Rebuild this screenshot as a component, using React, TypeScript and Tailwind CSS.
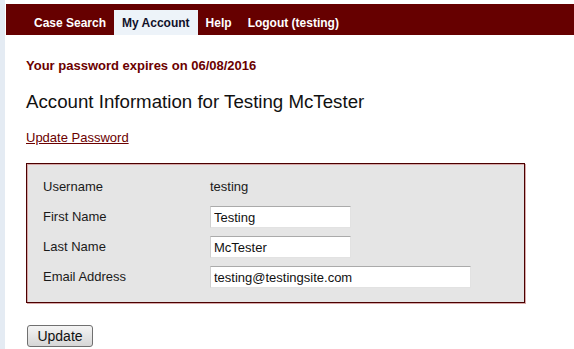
import React from 'react';

const navItems = ['Case Search', 'My Account', 'Help', 'Logout (testing)'];

const Field: React.FC<{ label: string; children: React.ReactNode }> = ({ label, children }) => (
  <div className="flex items-center h-[22px]">
    <div className="w-[167px]">{label}</div>
    {children}
  </div>
);

const TextInput: React.FC<{ value: string; width: string }> = ({ value, width }) => (
  <input
    defaultValue={value}
    className={`${width} h-[22px] bg-white border border-[#e2e2e2] border-t-[#aaaaaa] border-l-[#d0d0d0] pl-[3px] text-[13px] text-[#111] outline-none`}
  />
);

export default function App() {
  return (
    <div className="flex min-h-[349px] bg-white font-['Liberation_Sans',Arial,sans-serif]">
      <div className="w-[5px] shrink-0 bg-[#e4ebf3]" />
      <div className="flex-1 ml-px pt-[4px]">
        <nav className="h-[31px] bg-[#660000] flex items-end pl-[20px]">
          {navItems.map((item) => (
            <div
              key={item}
              className={
                item === 'My Account'
                  ? 'h-[25px] px-[8px] flex items-center text-[12px] font-bold text-[#11112a] bg-[#edf3f9]'
                  : 'h-[25px] px-[8px] flex items-center text-[12px] font-bold text-white'
              }
            >
              {item}
            </div>
          ))}
        </nav>

        <main className="pl-[20px]">
          <p className="mt-[23px] text-[13px] leading-[16px] font-bold text-[#6b0000]">
            Your password expires on 06/08/2016
          </p>
          <h1 className="mt-[17px] text-[18.7px] leading-[22px] text-[#111]">
            Account Information for Testing McTester
          </h1>
          <a href="#" className="block w-fit mt-[17px] text-[13px] leading-[16px] text-[#6b0000] underline">
            Update Password
          </a>

          <div className="mt-[17px] w-[499px] border border-[#4a0000] bg-[#e5e5e5] shadow-[1px_1px_0_#d8a8a8,inset_1px_1px_0_#d8a8a8] pl-[16px] pt-[12px] pb-[14px] flex flex-col gap-[8px] text-[13px] text-[#1a1a1a]">
            <Field label="Username">
              <span>testing</span>
            </Field>
            <Field label="First Name">
              <TextInput value="Testing" width="w-[141px]" />
            </Field>
            <Field label="Last Name">
              <TextInput value="McTester" width="w-[141px]" />
            </Field>
            <Field label="Email Address">
              <TextInput value="testing@testingsite.com" width="w-[261px]" />
            </Field>
          </div>

          <div className="mt-[21px] h-[22px]">
            <button className="ml-px w-[66px] h-[22px] border border-[#707070] rounded-[3px] bg-gradient-to-b from-[#f4f4f4] to-[#d6d6d6] text-[14px] leading-[20px] text-[#111]">
              Update
            </button>
          </div>
        </main>
      </div>
    </div>
  );
}
